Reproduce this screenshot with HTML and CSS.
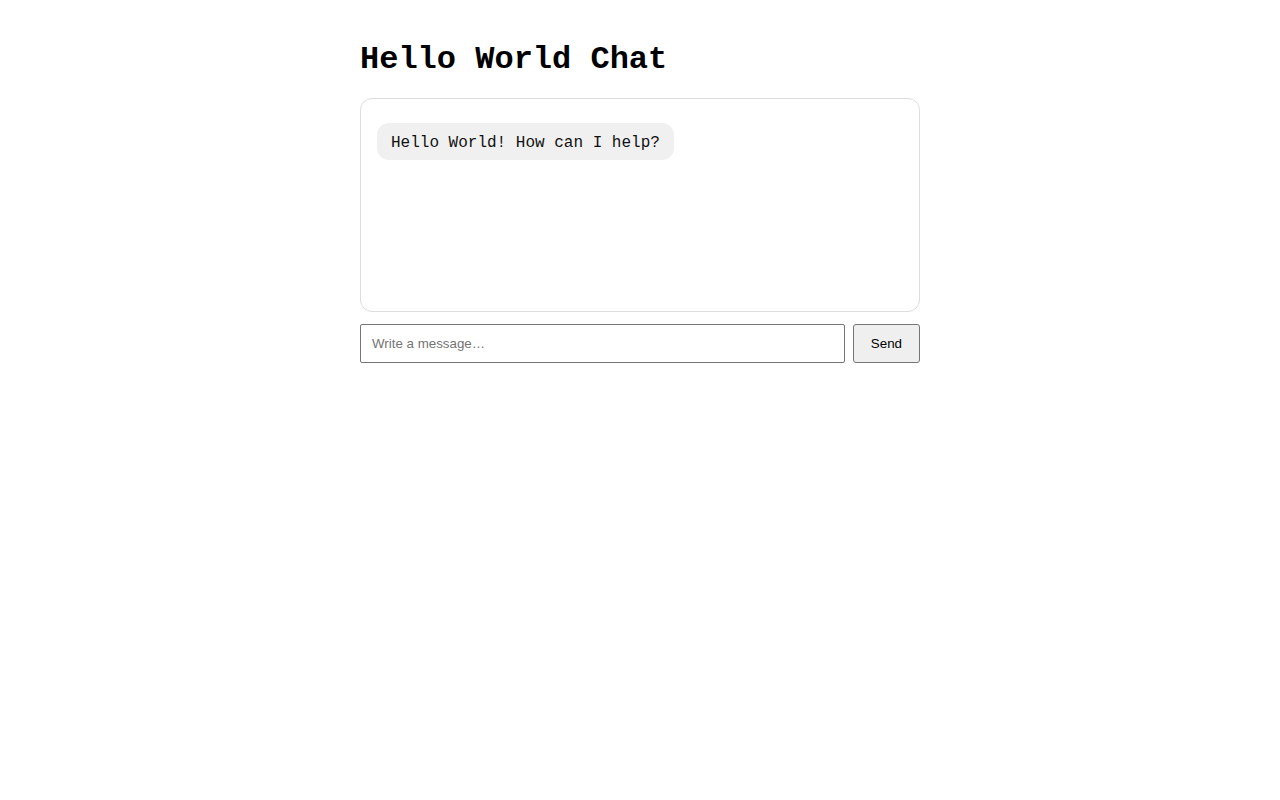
FILE: index.html
```html
<!DOCTYPE html>
<html lang="en">
<head>
<meta charset="utf-8">
<title>Hello World Chat</title>
<link rel="stylesheet" href="styles.css">
</head>
<body>
<main class="app">
  <h1 class="title">Hello World Chat</h1>
  <div class="chat">
    <div class="bubble">Hello World! How can I help?</div>
  </div>
  <form class="composer">
    <input class="composer-input" type="text" placeholder="Write a message…">
    <button class="composer-send" type="button">Send</button>
  </form>
</main>
</body>
</html>
```

FILE: styles.css
```css
html, body {
  margin: 0;
  background: #ffffff;
}
.app {
  width: 560px;
  margin: 0 auto;
  padding-top: 42px;
  font-family: "Liberation Mono", "DejaVu Sans Mono", monospace;
}
.title {
  margin: 0 0 20px 0;
  font-size: 32px;
  font-weight: bold;
  line-height: 36px;
  color: #000;
}
.chat {
  border: 1px solid #dddddd;
  border-radius: 12px;
  padding: 16px;
  min-height: 180px;
  display: flex;
  flex-direction: column;
  align-items: flex-start;
}
.bubble {
  margin-top: 8px;
  background: #f0f0f0;
  border-radius: 12px;
  padding: 11px 14px 7px;
  font-size: 16px;
  line-height: 19px;
  color: #111;
}
.composer {
  margin-top: 12px;
  display: flex;
  gap: 8px;
}
.composer-input {
  flex: 1;
  margin: 0;
  padding: 10px 11px;
  border: 1px solid #767676;
  border-radius: 2px;
  font-family: "Liberation Sans", Arial, sans-serif;
  font-size: 13.333px;
  line-height: 17px;
  color: #000;
}
.composer-input::placeholder {
  color: #757575;
}
.composer-send {
  margin: 0;
  padding: 0 17px;
  border: 1px solid #767676;
  border-radius: 3px;
  background: #efefef;
  font-family: "Liberation Sans", Arial, sans-serif;
  font-size: 13.333px;
  color: #000;
}
```
